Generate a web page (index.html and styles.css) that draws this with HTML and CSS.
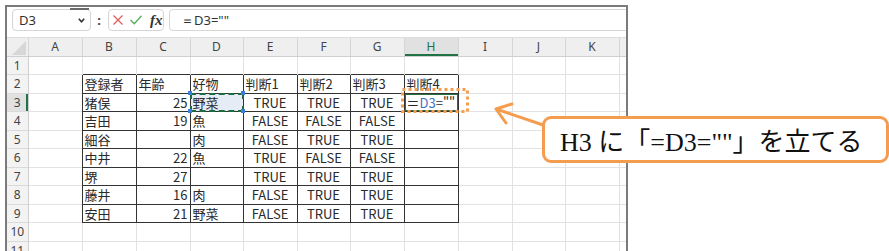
FILE: index.html
```html
<!DOCTYPE html>
<html lang="ja">
<head>
  <meta charset="UTF-8">
  <title>判断4 - ISBLANK</title>
  <link rel="stylesheet" href="styles.css">
</head>
<body>
  <div class="shot">
    <div class="window">
      <div class="formula-bar">
        <div class="name-box">
          <span>D3</span>
          <svg width="7" height="5" viewBox="0 0 7 5"><polyline points="0.8,0.8 3.5,3.8 6.2,0.8" fill="none" stroke="#333" stroke-width="1.6"/></svg>
        </div>
        <span class="grip">:</span>
        <div class="fx-buttons">
          <svg width="10" height="10" viewBox="0 0 10 10"><path d="M0.5 0.5 L9.5 9.5 M9.5 0.5 L0.5 9.5" stroke="#e25c5c" stroke-width="1.3"/></svg>
          <svg width="12" height="10" viewBox="0 0 12 10"><polyline points="0.5,5 4.3,8.8 11.5,0.8" fill="none" stroke="#55ad5c" stroke-width="1.3"/></svg>
          <i class="fx">fx</i>
        </div>
        <div class="formula-input">＝D3=""</div>
      </div>

      <table class="sheet">
        <colgroup>
          <col class="w-hdr">
          <col class="w54"><col class="w54"><col class="w54"><col class="w53">
          <col class="w54"><col class="w53"><col class="w54"><col class="w54">
          <col class="w54"><col class="w53"><col class="w54"><col class="w54">
        </colgroup>
        <thead>
          <tr>
            <th class="corner"><span class="corner-mark"></span></th>
            <th>A</th><th>B</th><th>C</th><th>D</th><th>E</th><th>F</th>
            <th>G</th><th class="sel">H</th><th>I</th><th>J</th><th>K</th><th></th>
          </tr>
        </thead>
        <tbody>
          <tr><th>1</th><td></td><td></td><td></td><td></td><td></td><td></td><td></td><td></td><td></td><td></td><td></td><td></td></tr>
          <tr><th>2</th><td></td>
            <td class="b">登録者</td><td class="b">年齢</td><td class="b">好物</td>
            <td class="b">判断1</td><td class="b">判断2</td><td class="b">判断3</td><td class="b">判断4</td>
            <td></td><td></td><td></td><td></td></tr>
          <tr><th class="sel">3</th><td></td>
            <td class="b">猪俣</td><td class="b n">25</td><td class="b copied">野菜</td>
            <td class="b c">TRUE</td><td class="b c">TRUE</td><td class="b c">TRUE</td>
            <td class="b active"><span class="eq">＝</span><span class="ref">D3</span>=""</td>
            <td></td><td></td><td></td><td></td></tr>
          <tr><th>4</th><td></td>
            <td class="b">吉田</td><td class="b n">19</td><td class="b">魚</td>
            <td class="b c">FALSE</td><td class="b c">FALSE</td><td class="b c">FALSE</td><td class="b"></td>
            <td></td><td></td><td></td><td></td></tr>
          <tr><th>5</th><td></td>
            <td class="b">細谷</td><td class="b n"></td><td class="b">肉</td>
            <td class="b c">FALSE</td><td class="b c">TRUE</td><td class="b c">TRUE</td><td class="b"></td>
            <td></td><td></td><td></td><td></td></tr>
          <tr><th>6</th><td></td>
            <td class="b">中井</td><td class="b n">22</td><td class="b">魚</td>
            <td class="b c">TRUE</td><td class="b c">FALSE</td><td class="b c">FALSE</td><td class="b"></td>
            <td></td><td></td><td></td><td></td></tr>
          <tr><th>7</th><td></td>
            <td class="b">堺</td><td class="b n">27</td><td class="b"></td>
            <td class="b c">TRUE</td><td class="b c">TRUE</td><td class="b c">TRUE</td><td class="b"></td>
            <td></td><td></td><td></td><td></td></tr>
          <tr><th>8</th><td></td>
            <td class="b">藤井</td><td class="b n">16</td><td class="b">肉</td>
            <td class="b c">FALSE</td><td class="b c">TRUE</td><td class="b c">TRUE</td><td class="b"></td>
            <td></td><td></td><td></td><td></td></tr>
          <tr><th>9</th><td></td>
            <td class="b">安田</td><td class="b n">21</td><td class="b">野菜</td>
            <td class="b c">FALSE</td><td class="b c">TRUE</td><td class="b c">TRUE</td><td class="b"></td>
            <td></td><td></td><td></td><td></td></tr>
          <tr><th>10</th><td></td><td></td><td></td><td></td><td></td><td></td><td></td><td></td><td></td><td></td><td></td><td></td></tr>
          <tr><th>11</th><td></td><td></td><td></td><td></td><td></td><td></td><td></td><td></td><td></td><td></td><td></td><td></td></tr>
        </tbody>
      </table>
    </div>

    <!-- annotation layer: dotted frame round H3 and the arrow -->
    <svg class="notes" width="889" height="251" viewBox="0 0 889 251">
      <rect x="402.5" y="89.5" width="65" height="22" fill="none" stroke="#f59d4e" stroke-width="3" stroke-dasharray="3 3"/>
      <path d="M546 126 L496 109 M512 104 L496 109 L506 123" fill="none" stroke="#f59d4e" stroke-width="3" stroke-linecap="round" stroke-linejoin="round"/>
    </svg>
    <div class="callout">H3 に「=D3=""」を立てる</div>
  </div>
</body>
</html>
```

FILE: styles.css
```css
body {
  margin: 0;
  background: #fff;
  font-family: "Noto Sans CJK JP", sans-serif;
}
.shot {
  position: relative;
  width: 889px;
  height: 251px;
  overflow: hidden;
}
.window {
  margin: 5px 0 0 5px;
  width: 619px;
  height: 260px;
  border: 2px solid #7b7b7b;
  border-bottom: none;
  overflow: hidden;
  background: #fff;
}

/* formula bar */
.formula-bar {
  height: 30px;
  box-sizing: border-box;
  padding: 2px 0 0 5px;
  display: flex;
  align-items: flex-start;
  font-family: "Noto Sans", sans-serif;
  font-size: 13px;
  color: #333;
}
.name-box {
  position: relative;
  width: 79px;
  height: 22px;
  box-sizing: border-box;
  border: 1px solid #d6d6d6;
  border-radius: 4px;
  padding: 0 5px 0 6px;
  display: flex;
  align-items: center;
  justify-content: space-between;
}
.name-box::before {
  content: "";
  position: absolute;
  top: -2px;
  right: 1px;
  width: 19px;
  height: 2px;
  background: #6a6a6a;
}
.grip {
  width: 8px;
  margin-left: 4px;
  line-height: 22px;
  text-align: center;
  font-weight: bold;
  color: #444;
}
.fx-buttons {
  width: 56px;
  height: 22px;
  margin-left: 5px;
  box-sizing: border-box;
  border: 1px solid #d6d6d6;
  border-radius: 4px;
  padding-left: 4px;
  display: flex;
  align-items: center;
  gap: 7px;
}
.fx {
  margin-left: 1px;
  font-family: "Liberation Serif", serif;
  font-size: 15px;
  font-weight: bold;
  color: #333;
}
.formula-input {
  flex: 1;
  height: 22px;
  margin: 0 -10px 0 5px;
  box-sizing: border-box;
  border: 1px solid #d6d6d6;
  border-radius: 4px;
  padding-left: 11px;
  line-height: 20px;
}

/* grid */
.sheet {
  width: 666px;
  table-layout: fixed;
  border-collapse: collapse;
  font-size: 13px;
  color: #2a2a2a;
}
.w-hdr { width: 21px; }
.w54 { width: 54px; }
.w53 { width: 53px; }
.sheet th,
.sheet td {
  padding: 0 2px;
  line-height: 16px;
  vertical-align: middle;
  white-space: nowrap;
  overflow: visible;
}
.sheet td {
  border-left: 1px solid #e2e2e2;
  border-top: 1px solid #e2e2e2;
}
.sheet th {
  font-family: "Noto Sans", sans-serif;
  font-weight: normal;
  font-size: 12px;
  color: #444;
  text-align: center;
}
.sheet thead tr { height: 19px; }
.sheet tbody tr { height: 18px; }
.sheet tbody tr:nth-child(even) { height: 19px; }
.sheet thead th {
  background: #efefef;
  border-top: 1px solid #dcdcdc;
  border-left: 1px solid #d6d6d6;
  border-bottom: 1px solid #cfcfcf;
}
.sheet tbody th {
  background: #f3f3f3;
  border-top: 1px solid #dadada;
  border-right: 1px solid #cfcfcf;
}
.sheet thead th.corner {
  border-left: none;
  padding: 0 2px 1px 0;
  text-align: right;
  vertical-align: bottom;
  line-height: 0;
}
.corner-mark {
  display: inline-block;
  border-left: 14px solid transparent;
  border-bottom: 14px solid #d7d7d7;
}
.sheet thead th.sel {
  background: #e1e1e1;
  color: #217346;
  box-shadow: inset 0 -2px 0 #217346;
}
.sheet tbody th.sel {
  background: #e1e1e1;
  box-shadow: inset -2px 0 0 #217346;
}

/* data table */
.sheet td.b { border: 1px solid #333; }
.sheet td.n { text-align: right; }
.sheet td.c { text-align: center; }
.sheet td.copied {
  position: relative;
  background: #e6ecf6;
}
.sheet td.copied::before {
  content: "";
  position: absolute;
  inset: -1px;
  border: 2px dashed #1d6b40;
}
.sheet td.copied::after {
  content: "";
  position: absolute;
  left: -3px;
  top: -3px;
  width: 4px;
  height: 4px;
  background: #3b7ddd;
  box-shadow: 53px 0 #3b7ddd, 0 18px #3b7ddd, 53px 18px #3b7ddd;
}
.sheet td.active {
  position: relative;
  overflow: hidden;
}
.sheet td.active::before {
  content: "";
  position: absolute;
  inset: -1px;
  border: 2px solid #217346;
}
.ref { color: #4472c4; }

/* annotation */
.notes {
  position: absolute;
  left: 0;
  top: 0;
  pointer-events: none;
}
.callout {
  position: absolute;
  left: 542px;
  top: 116px;
  width: 347px;
  height: 47px;
  box-sizing: border-box;
  border: 3px solid #f59d4e;
  border-radius: 9px;
  background: #fff;
  padding-left: 15px;
  display: flex;
  align-items: center;
  font-family: "Liberation Serif", "Noto Sans CJK JP", serif;
  font-size: 26px;
  color: #111;
  white-space: nowrap;
}
```
